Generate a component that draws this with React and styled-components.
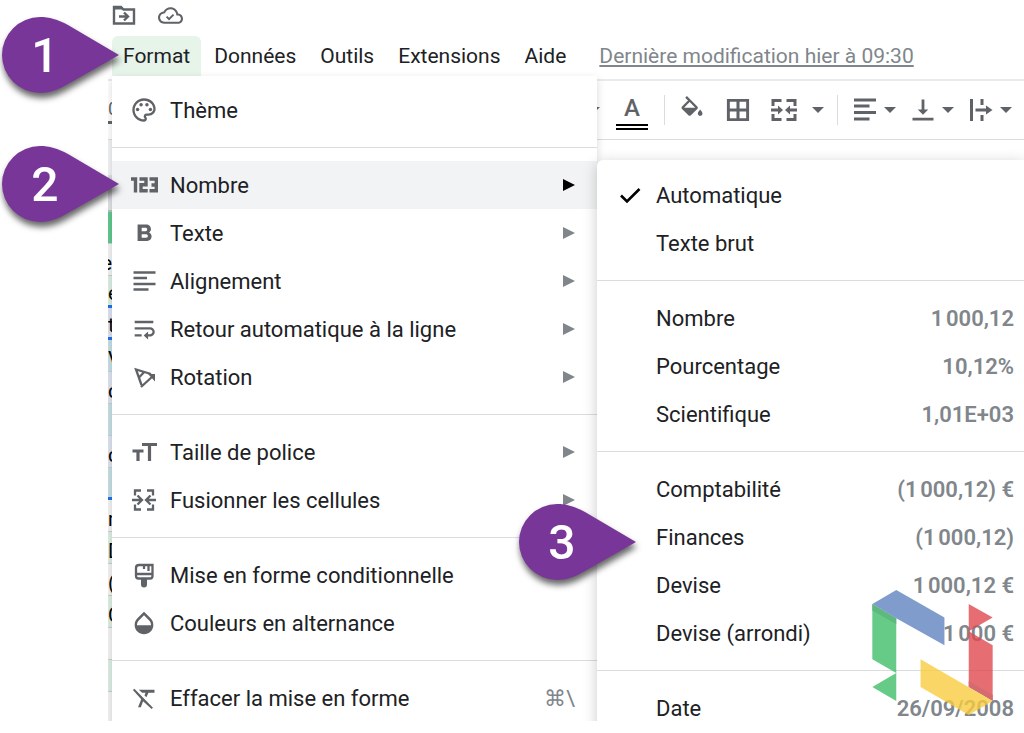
import React from "react";
import styled, { createGlobalStyle } from "styled-components";

const GlobalStyle = createGlobalStyle`
   * {
      box-sizing: border-box;
   }

   body {
      margin: 0;
      background: white;
      color: #202124;
      font-family: Roboto, "Liberation Sans", sans-serif;
   }

   button {
      padding: 0;
      border: 0;
      background: none;
      color: inherit;
      font: inherit;
      cursor: pointer;
   }
`;

const Page = styled.div`
   position: relative;
   height: 100vh;
   min-height: 400px;
   padding: 0 0 12px 108px;
   overflow: hidden;
`;

const Editor = styled.main`
   position: relative;
   display: flex;
   flex-direction: column;
   height: 100%;
   overflow: hidden;
`;

/* ---------- title bar and menu bar ---------- */

const TitleBar = styled.div`
   display: flex;
   align-items: center;
   flex-shrink: 0;
   gap: 20px;
   height: 36px;
   padding: 0 2px 6px;
   color: #5f6368;
`;

const IconButton = styled.button`
   display: flex;
   align-items: center;
`;

const MenuBar = styled.nav`
   display: flex;
   align-items: stretch;
   flex-shrink: 0;
   gap: 2px;
   height: 40px;
   padding-left: 4px;
   font-size: 21px;
`;

const MenuTitle = styled.button`
   padding: 0 11px;
   border-radius: 6px 6px 0 0;
   background: ${({ $open }) => ($open ? "#e6f4ea" : "none")};
`;

const LastEdit = styled.a`
   align-self: center;
   margin-left: 20px;
   color: #80868b;
   text-decoration: underline;
   white-space: nowrap;
`;

/* ---------- toolbar ---------- */

const Toolbar = styled.div`
   display: flex;
   align-items: center;
   flex-shrink: 0;
   gap: 13px;
   height: 61px;
   margin-top: 3px;
   border-top: 2px solid #e8eaed;
   border-bottom: 1px solid #dadce0;
   color: #5f6368;
`;

const Decimals = styled.button`
   width: 30px;
   margin-right: 437px;
   border-bottom: 3px solid #5f6368;
   text-align: left;
   font-size: 18px;
   line-height: 24px;
`;

const TextColor = styled.button`
   display: flex;
   flex-direction: column;
   align-items: center;
   width: 38px;
   padding-top: 4px;
   font-size: 24px;
   font-weight: 500;
   line-height: 26px;

   &::after {
      content: "";
      width: 32px;
      height: 2px;
      margin-top: 3px;
      border-top: 2px solid black;
      border-bottom: 2px solid black;
   }
`;

const ToolDivider = styled.span`
   width: 1px;
   height: 30px;
   background: #dadce0;
`;

const ToolGroup = styled.div`
   display: flex;
   align-items: center;
   gap: 18px;
`;

const SplitButton = styled.button`
   display: flex;
   align-items: center;
   gap: ${({ $wide }) => ($wide ? "14px" : "5px")};
`;

const Caret = styled.span`
   border: 6px solid transparent;
   border-top-color: #5f6368;
   border-bottom: 0;
`;

/* ---------- spreadsheet behind the menu ---------- */

const Sheet = styled.div`
   flex: 1;
   width: 4px;
   overflow: hidden;
`;

const SheetHeader = styled.div`
   height: 72px;
   border-bottom: 2px solid #bdbdbd;
   background: linear-gradient(#f1f3f4 50%, #dfe1e5 50%);
`;

const Cell = styled.div`
   display: flex;
   align-items: flex-end;
   justify-content: ${({ $tail }) => ($tail ? "flex-end" : "flex-start")};
   height: 32px;
   border-bottom: ${({ $selected }) => ($selected ? "3px solid #1a73e8" : "1px solid #c9ced3")};
   background: ${({ $fill }) => $fill};
   color: black;
   font-size: 20px;
   white-space: nowrap;
`;

/* ---------- menus ---------- */

const MenuLayer = styled.div`
   position: absolute;
   top: 76px;
   right: 0;
   bottom: 0;
   left: 4px;
   display: flex;
   align-items: flex-start;
`;

const Menu = styled.div`
   width: 485px;
   min-height: 100%;
   padding: 10px 0;
   background: white;
   box-shadow: 0 3px 8px rgba(60, 64, 67, 0.2);
`;

const SubMenu = styled.div`
   flex: 1;
   margin-top: 84px;
   padding: 11px 0;
   border-radius: 6px 0 0 0;
   background: white;
   box-shadow: 0 3px 14px rgba(60, 64, 67, 0.28);
`;

const MenuItem = styled.button`
   display: flex;
   align-items: center;
   gap: 12px;
   width: 100%;
   height: 48px;
   padding: 0 ${({ $sub }) => ($sub ? "10px 0 19px" : "22px 0 18px")};
   background: ${({ $active }) => ($active ? "#f1f3f4" : "none")};
   font-size: 22px;
   text-align: left;
   white-space: nowrap;
`;

const IconSlot = styled.span`
   display: flex;
   flex-shrink: 0;
   width: 28px;
   color: ${({ $dark }) => ($dark ? "black" : "#5f6368")};
`;

const ItemLabel = styled.span`
   flex: 1;
`;

const ItemHint = styled.span`
   color: #80868b;
   font-weight: ${({ $strong }) => ($strong ? 600 : 400)};
`;

const Arrow = styled.span`
   border: 6px solid transparent;
   border-left: 12px solid ${({ $active }) => ($active ? "black" : "#80868b")};
   border-right: 0;
`;

const Separator = styled.hr`
   height: 1px;
   margin: 13px 0;
   border: 0;
   background: #dadce0;
`;

/* ---------- numbered markers and logo ---------- */

const MarkerBox = styled.div`
   position: absolute;
   top: ${({ $y }) => $y}px;
   left: ${({ $x }) => $x}px;
   width: 117px;
   height: 76px;
   filter: drop-shadow(1px 5px 3px rgba(0, 0, 0, 0.6));

   svg {
      display: block;
   }
`;

const MarkerNumber = styled.span`
   position: absolute;
   top: 0;
   left: 0;
   width: 86px;
   color: white;
   font-size: 48px;
   font-weight: 500;
   line-height: 78px;
   text-align: center;
`;

const Logo = styled.svg`
   position: absolute;
   top: 590px;
   right: 31px;
   opacity: 0.8;
`;

/* ---------- icons ---------- */

const Fill = ({ d, size = 28, children }) => (
   <svg width={size} height={size} viewBox="0 0 24 24" fill="currentColor">
      <path d={d} />
      {children}
   </svg>
);

const Line = ({ d, width = 2, children }) => (
   <svg width="28" height="28" viewBox="0 0 28 28" fill="none" stroke="currentColor" strokeWidth={width}>
      <path d={d} />
      {children}
   </svg>
);

const icons = {
   move: (
      <Line width={2.4} d="M4 6H11L13.500 8.500H24V22.500H4Z M9 15.500H17 M14 11.500L18 15.500L14 19.500">
         <path d="M4 5H11L14 8.500H4Z" fill="currentColor" stroke="none" />
      </Line>
   ),
   cloud: (
      <Fill
         size={25}
         d="M19.35 10.04C18.67 6.59 15.64 4 12 4 9.11 4 6.6 5.64 5.35 8.04 2.34 8.36 0 10.91 0 14c0 3.31 2.69 6 6 6h13c2.76 0 5-2.24 5-5 0-2.64-2.05-4.78-4.65-4.96zM19 18H6c-2.21 0-4-1.79-4-4 0-2.05 1.53-3.76 3.56-3.97l1.07-.11.5-.95C8.08 7.14 9.94 6 12 6c2.62 0 4.88 1.86 5.39 4.43l.3 1.5 1.53.11c1.56.1 2.78 1.41 2.78 2.96 0 1.65-1.35 3-3 3zm-8.4-3.82l-1.7-1.700-1.300 1.300L10.600 16.800l5-5-1.300-1.300z"
      />
   ),
   palette: (
      <Fill d="M12 22C6.49 22 2 17.51 2 12S6.49 2 12 2s10 4.04 10 9c0 3.31-2.69 6-6 6h-1.77c-.28 0-.5.22-.5.5 0 .12.05.23.13.33.41.47.64 1.06.64 1.67 0 1.38-1.12 2.5-2.5 2.5zm0-18c-4.41 0-8 3.59-8 8s3.59 8 8 8c.28 0 .5-.22.5-.5 0-.16-.08-.28-.14-.35-.41-.46-.63-1.05-.63-1.65 0-1.38 1.12-2.5 2.5-2.5H16c2.21 0 4-1.79 4-4 0-3.86-3.59-7-8-7z">
         <circle cx="6.500" cy="11.500" r="1.500" />
         <circle cx="9.500" cy="7.500" r="1.500" />
         <circle cx="14.500" cy="7.500" r="1.500" />
         <circle cx="17.500" cy="11.500" r="1.500" />
      </Fill>
   ),
   number: (
      <Line
         width={3.4}
         d="M1 8H5.500V21.500 M9.500 8H16V13.700H11V19.800H17.700 M19.500 8H26.300V19.800H19.500 M21.500 14H26.300"
      />
   ),
   bold: (
      <Fill d="M16.4 11.600c.9-.67 1.55-1.7 1.55-2.790 0-2.26-1.75-4-4-4H6.500v14h8.2c2.09 0 3.810-1.7 3.810-3.79 0-1.52-.86-2.82-2.110-3.420zM10 7.600h3.300c.83 0 1.4.57 1.4 1.400s-.57 1.400-1.400 1.400H10V7.600zm3.800 8.400H10v-3h3.800c.9 0 1.500.67 1.500 1.500s-.6 1.500-1.500 1.500z" />
   ),
   align: <Line width={2.3} d="M3.500 5.500H25.500 M3.500 11H17 M3.500 17H25.500 M3.500 22.500H18.500" />,
   alignBold: <Line width={3} d="M3 4H25 M3 10H18.500 M3 16.500H25 M3 23H18.500" />,
   wrap: (
      <Fill d="M4 18.400h6v-2H4v2zM20 5H4v2h16V5zm-3 5.500H4v2h13.25c1.100 0 2 .8 2 1.950s-.9 1.950-2 1.950H15.500v-2.200l-3.800 3.300 3.800 3.400v-2.400H17c2.210 0 4.200-1.790 4.200-4s-1.990-4-4.200-4z" />
   ),
   rotate: (
      <Line width={2.3} d="M11.500 22L6 6.500L21 11 M9 14.500L14.500 8.800 M11 24L23 13">
         <path d="M18 11H25V18.500Z" fill="currentColor" stroke="none" />
      </Line>
   ),
   size: <Line width={3.2} d="M12 6.500H27 M19.500 6.500V23 M2.500 13H13.500 M8 13V23" />,
   merge: (
      <Line
         width={2.3}
         d="M5 9.500V4.500H11 M5 18.500V23.500H11 M23 9.500V4.500H17 M23 18.500V23.500H17 M2 14H11 M26 14H17 M7.500 9.500L12 14L7.500 18.500 M20.500 9.500L16 14L20.500 18.500"
      />
   ),
   mergeBold: (
      <Line width={3} d="M3 10V4.500H11.500 M3 18V23.500H11.500 M25 10V4.500H16.500 M25 18V23.500H16.500 M1 14H9 M27 14H19">
         <path d="M8 9.500L13 14L8 18.500Z M20 9.500L15 14L20 18.500Z" fill="currentColor" stroke="none" />
      </Line>
   ),
   brush: (
      <Line
         width={2.3}
         d="M9 4H22.500V15C22.500 16.500 21.500 17.500 20 17.500H8.500C7 17.500 6 16.500 6 15V7C6 5 7 4 9 4Z M6 13H22.500 M14 4V8 M18.500 4V10"
      >
         <path d="M11 17H17V23.500A3 3 0 0 1 11 23.500Z" fill="currentColor" stroke="none" />
      </Line>
   ),
   drop: (
      <Fill d="M17.66 8L12 2.35 6.34 8C4.78 9.56 4 11.64 4 13.64s.78 4.11 2.34 5.67 3.61 2.35 5.66 2.35 4.1-.79 5.66-2.35S20 15.64 20 13.64 19.22 9.56 17.66 8zM6 14c.01-2 .62-3.27 1.76-4.4L12 5.27l4.24 4.38C17.38 10.77 17.99 12 18 14H6z" />
   ),
   clear: (
      <Fill d="M3.700 4L2.500 5.200l7.100 7.800L6.900 20h2.400l1.900-5.200L18.500 21.500 19.700 20.300 4.400 4.700zM7.500 5l2.900 2.600h2.900l-.9 2.200 1.700 1.600L15.800 7.600H21V5H7.500z" />
   ),
   bucket: (
      <Fill d="M16.56 8.94L7.62 0 6.21 1.41l2.38 2.38-5.15 5.15c-.59.59-.59 1.54 0 2.12l5.5 5.5c.29.29.68.44 1.06.44s.77-.15 1.06-.44l5.5-5.5c.59-.58.59-1.53 0-2.12zM5.21 10L10 5.21 14.79 10H5.21zM19 11.5s-2 2.17-2 3.5c0 1.1.9 2 2 2s2-.9 2-2c0-1.33-2-3.5-2-3.5z" />
   ),
   grid: <Fill d="M2.500 2.500v19h19V2.500h-19zm8.200 16.500H5v-5.700h5.700V19zm0-8.300H5V5h5.700v5.700zM19 19h-5.700v-5.700H19V19zm0-8.300h-5.700V5H19v5.700z" />,
   bottom: <Fill d="M16.500 11.500h-3.300V3h-2.400v8.500H7.500l4.500 4.500 4.500-4.500zM3 18.700v2.400h18v-2.400H3z" />,
   overflow: (
      <Line width={3} d="M4.500 3V25 M15 3V9 M15 19V25 M8.500 14H21">
         <path d="M19 9.500L25.500 14L19 18.500Z" fill="currentColor" stroke="none" />
      </Line>
   ),
   check: <Line width={2.6} d="M5 14.500L11 20.500L23.500 8" />
};

/* ---------- data ---------- */

const titles = ["Format", "Données", "Outils", "Extensions", "Aide"];

const formatMenu = [
   [{ icon: "palette", label: "Thème" }],
   [
      { icon: "number", label: "Nombre", more: true, active: true },
      { icon: "bold", label: "Texte", more: true },
      { icon: "align", label: "Alignement", more: true },
      { icon: "wrap", label: "Retour automatique à la ligne", more: true },
      { icon: "rotate", label: "Rotation", more: true }
   ],
   [
      { icon: "size", label: "Taille de police", more: true },
      { icon: "merge", label: "Fusionner les cellules", more: true }
   ],
   [
      { icon: "brush", label: "Mise en forme conditionnelle" },
      { icon: "drop", label: "Couleurs en alternance" }
   ],
   [{ icon: "clear", label: "Effacer la mise en forme", hint: "⌘\\" }]
];

const numberMenu = [
   [{ icon: "check", label: "Automatique" }, { label: "Texte brut" }],
   [
      { label: "Nombre", hint: "1\u202f000,12" },
      { label: "Pourcentage", hint: "10,12%" },
      { label: "Scientifique", hint: "1,01E+03" }
   ],
   [
      { label: "Comptabilité", hint: "(1\u202f000,12) €" },
      { label: "Finances", hint: "(1\u202f000,12)" },
      { label: "Devise", hint: "1\u202f000,12 €" },
      { label: "Devise (arrondi)", hint: "1\u202f000 €" }
   ],
   [{ label: "Date", hint: "26/09/2008" }]
];

const cells = [
   { fill: "#5dc98c" },
   { text: "e", fill: "#f3f3f3", tail: true },
   { text: "e", fill: "#dcefe3", selected: true },
   { text: "t", fill: "#dbe2f1", selected: true },
   { text: "V", fill: "#c5dfe4" },
   { text: "c", fill: "#dbe2f1" },
   { fill: "#c5dfe4" },
   { text: "c", fill: "#dbe2f1" },
   { fill: "#c5dfe4", selected: true },
   { text: "r", fill: "#f3f3f3" },
   { text: "D", fill: "#dcefe3" },
   { text: "(", fill: "#f3f3f3" },
   { text: "C", fill: "#dcefe3" },
   { fill: "#f3f3f3" },
   { fill: "#dcefe3" },
   { fill: "#f3f3f3" }
];

const markers = [
   { number: 1, x: 2, y: 17 },
   { number: 2, x: 2, y: 146 },
   { number: 3, x: 519, y: 504 }
];

/* ---------- components ---------- */

const MenuGroups = ({ groups, sub }) =>
   groups.map((group, index) => (
      <React.Fragment key={index}>
         {index > 0 && <Separator />}
         {group.map(item => (
            <MenuItem key={item.label} $sub={sub} $active={item.active}>
               <IconSlot $dark={sub}>{icons[item.icon]}</IconSlot>
               <ItemLabel>{item.label}</ItemLabel>
               {item.hint && <ItemHint $strong={sub}>{item.hint}</ItemHint>}
               {item.more && <Arrow $active={item.active} />}
            </MenuItem>
         ))}
      </React.Fragment>
   ));

const Marker = ({ number, x, y }) => (
   <MarkerBox $x={x} $y={y}>
      <svg width="117" height="76" viewBox="0 0 117 76">
         <path
            d="M38 0C47 0 56 2.500 66 8L117 38L66 67C56 73 47 76 38 76A38 38 0 0 1 38 0Z"
            fill="#783698"
         />
      </svg>
      <MarkerNumber>{number}</MarkerNumber>
   </MarkerBox>
);

const App = () => (
   <Page>
      <GlobalStyle />
      <Editor>
         <TitleBar>
            <IconButton aria-label="Déplacer">{icons.move}</IconButton>
            <IconButton aria-label="État du document">{icons.cloud}</IconButton>
         </TitleBar>
         <MenuBar>
            {titles.map((title, index) => (
               <MenuTitle key={title} $open={index === 0}>
                  {title}
               </MenuTitle>
            ))}
            <LastEdit href="#">Dernière modification hier à 09:30</LastEdit>
         </MenuBar>
         <Toolbar>
            <Decimals>0</Decimals>
            <Caret />
            <TextColor>A</TextColor>
            <ToolDivider />
            <ToolGroup>
               <IconButton aria-label="Remplissage">{icons.bucket}</IconButton>
               <IconButton aria-label="Bordures">{icons.grid}</IconButton>
               <SplitButton $wide aria-label="Fusionner">
                  {icons.mergeBold}
                  <Caret />
               </SplitButton>
            </ToolGroup>
            <ToolDivider />
            <SplitButton aria-label="Alignement horizontal">
               {icons.alignBold}
               <Caret />
            </SplitButton>
            <SplitButton aria-label="Alignement vertical">
               {icons.bottom}
               <Caret />
            </SplitButton>
            <SplitButton aria-label="Retour à la ligne">
               {icons.overflow}
               <Caret />
            </SplitButton>
         </Toolbar>
         <Sheet>
            <SheetHeader />
            {cells.map((cell, index) => (
               <Cell key={index} $fill={cell.fill} $tail={cell.tail} $selected={cell.selected}>
                  {cell.text}
               </Cell>
            ))}
         </Sheet>
         <MenuLayer>
            <Menu>
               <MenuGroups groups={formatMenu} />
            </Menu>
            <SubMenu>
               <MenuGroups groups={numberMenu} sub />
            </SubMenu>
         </MenuLayer>
      </Editor>
      {markers.map(marker => (
         <Marker key={marker.number} {...marker} />
      ))}
      <Logo width="121" height="125" viewBox="98 60 362 376">
         <path d="M98 102L170 145V310L98 268Z M98 352L170 310V394Z" fill="#40bf6a" />
         <path d="M98 102L170 145V163L98 122Z" fill="#38a860" />
         <path d="M98 102L170 60L315 143V226L170 145Z" fill="#6084c0" />
         <path d="M388 102L460 143L388 184Z M388 184L460 226V394L388 352Z" fill="#e04a50" />
         <path d="M388 334L460 376V394L388 352Z" fill="#c8484e" />
         <path d="M243 268L460 394L388 436L243 352Z" fill="#f8cd40" />
      </Logo>
   </Page>
);

export default App;
